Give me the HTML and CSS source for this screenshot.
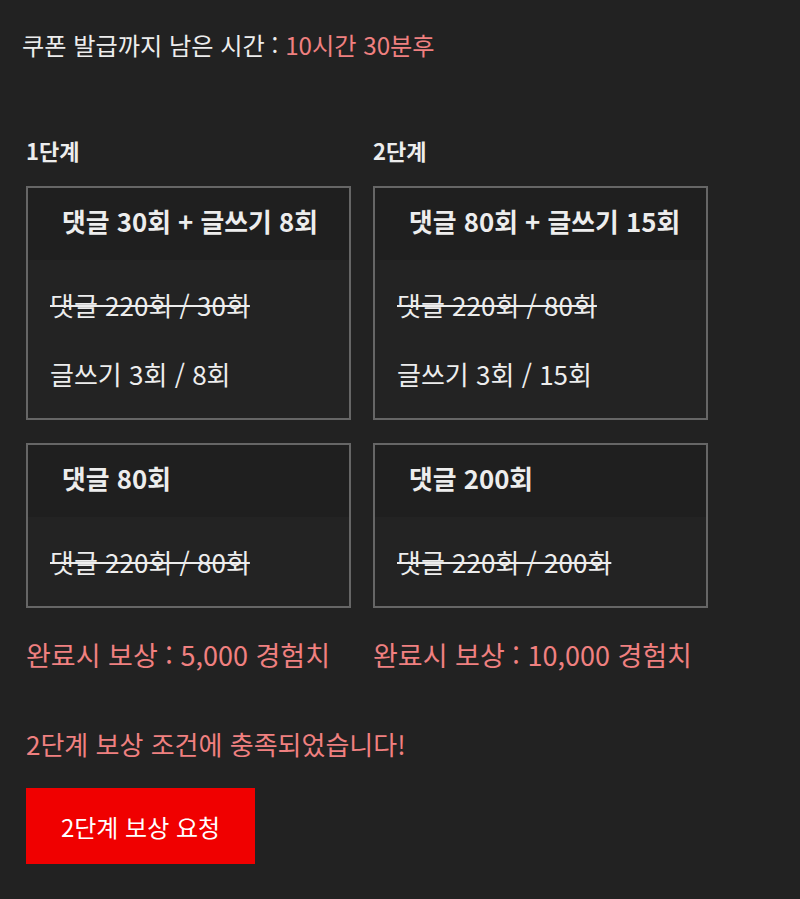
FILE: index.html
```html
<!DOCTYPE html>
<html lang="ko">
<head>
<meta charset="utf-8">
<link rel="stylesheet" href="styles.css">
</head>
<body>
<div class="page">
  <div class="timer">쿠폰 발급까지 남은 시간 : <span class="accent">10시간 30분후</span></div>
  <div class="stages">
    <div class="stage stage-1">
      <div class="stage-label">1단계</div>
      <div class="card">
        <div class="card-head">댓글 30회 + 글쓰기 8회</div>
        <div class="card-body">
          <div class="line done">댓글 220회 / 30회</div>
          <div class="line">글쓰기 3회 / 8회</div>
        </div>
      </div>
      <div class="card">
        <div class="card-head">댓글 80회</div>
        <div class="card-body">
          <div class="line done">댓글 220회 / 80회</div>
        </div>
      </div>
      <div class="reward">완료시 보상 : 5,000 경험치</div>
    </div>
    <div class="stage stage-2">
      <div class="stage-label">2단계</div>
      <div class="card">
        <div class="card-head">댓글 80회 + 글쓰기 15회</div>
        <div class="card-body">
          <div class="line done">댓글 220회 / 80회</div>
          <div class="line">글쓰기 3회 / 15회</div>
        </div>
      </div>
      <div class="card">
        <div class="card-head">댓글 200회</div>
        <div class="card-body">
          <div class="line done">댓글 220회 / 200회</div>
        </div>
      </div>
      <div class="reward">완료시 보상 : 10,000 경험치</div>
    </div>
  </div>
  <div class="message">2단계 보상 조건에 충족되었습니다!</div>
  <button class="claim" type="button">2단계 보상 요청</button>
</div>
</body>
</html>
```

FILE: styles.css
```css
html, body {
  margin: 0;
  padding: 0;
  background: #222222;
}
body {
  font-family: "Noto Sans CJK KR", "Noto Sans", sans-serif;
  color: #ededed;
  min-height: 899px;
}
.page {
  padding: 30px 0 0 26px;
}
.timer {
  margin-left: -4px;
  font-size: 24.2px;
  line-height: 30px;
}
.accent {
  color: #f08080;
}
.stages {
  display: flex;
  gap: 22px;
  margin-top: 75px;
}
.stage {
  display: flex;
  flex-direction: column;
}
.stage-1 { width: 325px; }
.stage-2 { width: 335px; }
.stage-label {
  font-size: 22px;
  font-weight: 700;
  line-height: 30px;
  margin-bottom: 21px;
}
.card {
  border: 2px solid #666666;
  margin-bottom: 23px;
}
.card + .card {
  margin-bottom: 0;
}
.card-head {
  box-sizing: border-box;
  height: 72px;
  display: flex;
  align-items: center;
  padding-left: 34px;
  padding-bottom: 7px;
  background: #1f1f1f;
  font-size: 25.8px;
  font-weight: 700;
  white-space: nowrap;
}
.card-body {
  background: #232323;
  padding: 25px 22px 24px;
  display: flex;
  flex-direction: column;
  gap: 29px;
}
.line {
  font-size: 26px;
  line-height: 40px;
  white-space: nowrap;
}
.done {
  text-decoration: line-through;
  text-decoration-thickness: 2px;
}
.reward {
  margin-top: 27px;
  color: #f08080;
  font-size: 27px;
  line-height: 40px;
  white-space: nowrap;
}
.message {
  margin-top: 49px;
  color: #f08080;
  font-size: 26px;
  line-height: 40px;
}
.claim {
  display: block;
  margin-top: 24px;
  width: 229px;
  height: 76px;
  border: none;
  background: #f00000;
  color: #ffffff;
  font-family: inherit;
  font-size: 24px;
  padding: 0;
}
```
